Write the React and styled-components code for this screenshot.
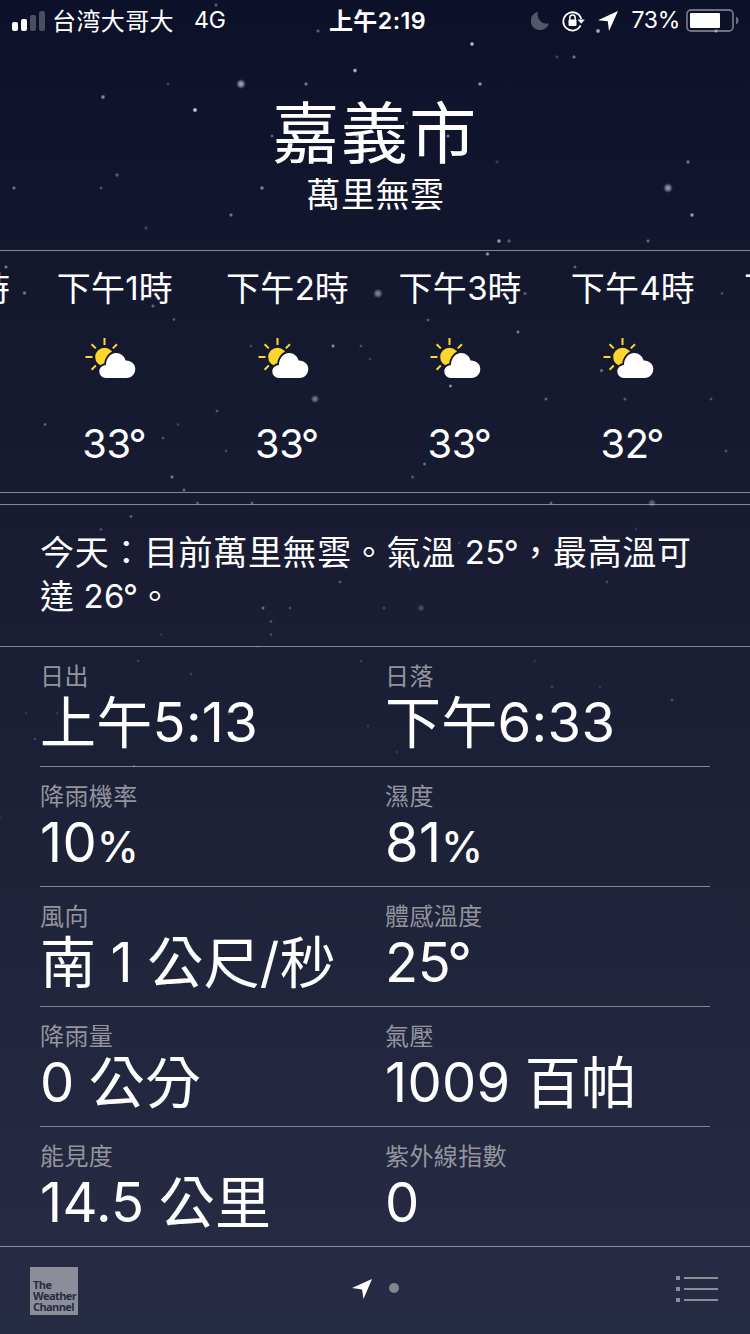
import React from "react";
import styled, { createGlobalStyle } from "styled-components";

const GlobalStyle = createGlobalStyle`
  html, body { margin: 0; padding: 0; }
  body { background: #0e122a; }
`;

const Screen = styled.main`
  position: relative;
  display: flex;
  flex-direction: column;
  width: 750px;
  height: 1334px;
  overflow: hidden;
  color: #fff;
  background: linear-gradient(180deg, #0c1028 0, #0f132b 100px, #141930 330px, #191c33 560px, #1c2037 740px, #262a42 1240px, #272c45 1334px);
  font-family: Inter, "Noto Sans CJK TC", sans-serif;

  & > * {
    flex: none;
  }
`;

const Sky = styled.svg`
  position: absolute;
  inset: 0;
  pointer-events: none;
`;

const Han = styled.span`
  font-family: "Noto Sans CJK TC", sans-serif;
  letter-spacing: ${(p) => p.$track || 0}px;
  line-height: 0;
  vertical-align: -0.025em;
`;

const Latin = styled.span`
  font-family: Inter, "Noto Sans CJK TC", sans-serif;
  font-size: 0.97em;
  letter-spacing: ${(p) => p.$track || 0}px;
  word-spacing: -0.025em;
  line-height: 0;
`;

const Degree = styled.span`
  margin: 0 -0.02em 0 -0.06em;
`;

function Mixed({ text, han = 0, latin = 0 }) {
  return text
    .split(/([ -~°]+)/)
    .filter(Boolean)
    .map((run, i) =>
      /^[ -~°]/.test(run) ? (
        <Latin key={i} $track={latin}>
          {run.replace("°", "")}
          {run.includes("°") && <Degree>°</Degree>}
        </Latin>
      ) : (
        <Han key={i} $track={han}>{run}</Han>
      )
    );
}

const StatusBar = styled.header`
  display: grid;
  grid-template-columns: 1fr auto 1fr;
  align-items: center;
  height: 40px;
  padding: 0 11px 0 12px;
  font-size: 24px;
  line-height: 41px;
  white-space: pre;
`;

const StatusSide = styled.div`
  display: flex;
  align-items: center;
  justify-content: ${(p) => (p.$end ? "flex-end" : "flex-start")};
  height: 40px;
`;

const Carrier = styled.span`
  margin-left: 6px;
  font-size: 24px;
`;

const Network = styled.span`
  margin-left: 20px;
  font-size: 23px;
`;

const Clock = styled.span`
  font-size: 24px;
  font-weight: 600;
  padding-left: 4px;
`;

const Percent = styled.span`
  margin: 0 6px 0 13px;
  font-size: 23px;
  letter-spacing: -0.3px;
`;

const StatusIcon = styled.svg`
  flex: none;
  margin-left: ${(p) => p.$gap || 0}px;
`;

const Heading = styled.section`
  display: flex;
  flex-direction: column;
  align-items: center;
  height: 210px;
`;

const City = styled.h1`
  margin: 54px 0 0;
  font-size: 67px;
  font-weight: 400;
  line-height: 76px;
`;

const Condition = styled.p`
  margin: 4px 0 0 1px;
  font-size: 34px;
  line-height: 40px;
`;

const Hours = styled.section`
  display: flex;
  box-sizing: border-box;
  height: 243px;
  padding-left: 28.5px;
  border-top: 1px solid #85868f;
  border-bottom: 1px solid #85868f;
`;

const HourStrip = styled.div`
  display: flex;
  margin-left: -172.7px;
`;

const Hour = styled.div`
  display: flex;
  flex: none;
  flex-direction: column;
  align-items: center;
  width: 172.7px;
  white-space: nowrap;
`;

const HourName = styled.span`
  margin-top: 17px;
  font-size: 34px;
  line-height: 40px;
`;

const HourIcon = styled.svg`
  margin: 29px 9px 0 0;
`;

const HourTemp = styled.span`
  margin: 39px 2px 0 0;
  font-size: 41px;
  line-height: 50px;
`;

const Summary = styled.section`
  box-sizing: border-box;
  height: 143px;
  margin-top: 11px;
  padding: 25px 40px 0;
  border-top: 1px solid #85868f;
  border-bottom: 1px solid #85868f;
  font-size: 34px;
  line-height: 44px;
  white-space: nowrap;
`;

const SummaryLine = styled.div`
  height: 44px;
`;

const Details = styled.section`
  display: flex;
  flex-direction: column;
  padding: 0 40px;
`;

const DetailRow = styled.div`
  display: grid;
  grid-template-columns: 345px 1fr;
  box-sizing: border-box;
  height: ${(p) => (p.$last ? 119 : 120)}px;
  border-bottom: ${(p) => (p.$last ? "0" : "1px solid #85868f")};
  white-space: nowrap;
`;

const Detail = styled.div`
  display: flex;
  flex-direction: column;
`;

const DetailLabel = styled.span`
  margin-top: 13px;
  font-size: 24px;
  line-height: 32px;
  color: #93949e;
`;

const DetailValue = styled.span`
  height: 60px;
  font-size: 56px;
  line-height: 60px;
`;

const Unit = styled.span`
  font-size: 42px;
  font-weight: 500;
  letter-spacing: -1px;
  line-height: 0;
`;

const TabBar = styled.footer`
  display: grid;
  grid-template-columns: 1fr auto 1fr;
  align-items: center;
  box-sizing: border-box;
  height: 88px;
  padding: 1px 32px 0 30px;
  border-top: 1px solid #8c8d98;
`;

const Provider = styled.div`
  display: flex;
  flex-direction: column;
  justify-content: flex-end;
  box-sizing: border-box;
  width: 48px;
  height: 48px;
  padding: 0 0 3px 3px;
  background: #8b8d99;
  color: #272b44;
  font: 700 11px/11px "Open Sans", sans-serif;
  letter-spacing: -0.6px;
`;

const Pages = styled.div`
  display: flex;
  align-items: center;
  gap: 17px;
  padding: 0 0 4px 2px;
`;

const PageDot = styled.span`
  width: 10px;
  height: 10px;
  margin-bottom: 2px;
  border-radius: 50%;
  background: #83858f;
`;

const ListButton = styled.svg`
  justify-self: end;
  margin-bottom: 3px;
`;

const stars = [
  [216, 5, 1.8, 0.4], [598, 31, 2.2, 0.8], [716, 31, 2, 0.5], [557, 57, 1.8, 0.25], [574, 57, 1.8, 0.5], [472, 44, 2, 0.9],
  [318, 31, 1.8, 0.4], [355, 70.5, 2, 0.85], [168, 84, 1.7, 0.25], [241, 84, 4, 0.65], [306, 84, 1.8, 0.55], [103, 97, 2.1, 0.6], [195, 110, 2.2, 0.95],
  [480, 84, 2, 0.65], [272, 136, 1.7, 0.4], [117, 175, 2, 0.35], [14, 188, 1.8, 0.5], [101, 188, 1.6, 0.35], [262, 188, 1.9, 0.6],
  [231, 215, 1.8, 0.5], [146, 228, 1.8, 0.25], [407, 123, 1.7, 0.2], [448, 136, 1.8, 0.5], [357, 136, 1.8, 0.4], [497, 162, 1.8, 0.2], [688, 162, 1.9, 0.5],
  [668, 188, 4, 0.6], [692, 215, 2, 0.7], [499, 241, 2, 0.7], [509, 241, 1.9, 0.35], [648, 241, 1.8, 0.4],
  [487.5, 254, 1.9, 0.65], [6, 267, 1.8, 0.5], [24.5, 293, 1.9, 0.5], [153, 306, 1.8, 0.4], [174, 319.5, 1.6, 0.35], [251, 346, 1.6, 0.25], [333, 346, 1.8, 0.6],
  [361, 346, 1.6, 0.3], [370, 359, 1.6, 0.2], [315, 399, 3.5, 0.45], [217, 411, 1.6, 0.35], [45, 424.5, 1.6, 0.4], [178, 424.5, 1.6, 0.2], [163, 438, 1.6, 0.3],
  [226, 451, 1.6, 0.25], [172, 477, 1.8, 0.5], [184, 490, 1.7, 0.4], [244, 280, 1.7, 0.35], [378, 293.5, 4, 0.5], [575, 267, 1.7, 0.4], [525, 293.5, 1.7, 0.4], [722, 293.5, 1.6, 0.3],
  [428, 320, 1.7, 0.35], [518, 332, 1.7, 0.55], [601.5, 370.5, 1.3, 0.65, "#69b586"], [450.5, 386, 1.7, 0.65], [546, 399, 1.7, 0.4], [625, 399, 1.7, 0.35],
  [711, 399, 1.6, 0.3], [424.5, 464, 1.6, 0.5], [412.5, 477, 1.7, 0.35], [726, 451, 1.7, 0.3], [197.5, 503, 1.6, 0.4], [252, 503, 1.6, 0.4], [551, 503, 1.6, 0.4], [652, 503, 3.3, 0.35],
  [131, 516.5, 1.6, 0.4], [101, 529.5, 1.6, 0.3], [340, 582, 1.6, 0.35], [263, 608, 1.7, 0.45], [290, 608, 1.6, 0.25], [271, 621.5, 1.6, 0.3], [271, 634.5, 1.6, 0.25], [161, 634.5, 1.5, 0.15],
  [258, 647, 1.5, 0.1], [636, 529, 1.5, 0.15], [459, 543, 1.6, 0.15], [410, 569, 1.6, 0.3], [607, 582, 1.6, 0.25], [384, 608, 1.6, 0.25], [421, 608, 3, 0.25],
  [138, 661, 1.5, 0.2], [191, 674, 1.5, 0.2], [361, 661, 1.5, 0.2], [26, 713, 1.5, 0.13], [57, 713, 1.5, 0.13], [35, 739, 1.5, 0.2], [229, 713, 2.4, 0.12], [368, 726, 1.5, 0.15],
  [552, 687, 1.6, 0.2], [600, 687, 1.5, 0.13], [672, 700, 1.5, 0.3], [397, 752, 1.5, 0.13], [134, 766, 1.5, 0.2], [535, 661, 1.5, 0.1], [0, 818, 1.5, 0.12],
];

const hours = [
  ["下午12時", "33°"], ["下午1時", "33°"], ["下午2時", "33°"], ["下午3時", "33°"], ["下午4時", "32°"], ["下午5時", "31°"],
];

const details = [
  [["日出", "上午5:13"], ["日落", "下午6:33"]],
  [["降雨機率", "10", "%"], ["濕度", "81", "%"]],
  [["風向", "南 1 公尺/秒"], ["體感溫度", "25°"]],
  [["降雨量", "0 公分"], ["氣壓", "1009 百帕"]],
  [["能見度", "14.5 公里"], ["紫外線指數", "0"]],
];

function Stars() {
  return (
    <Sky width="750" height="1334" viewBox="0 0 750 1334">
      <defs>
        <radialGradient id="glow">
          <stop offset="0" stopColor="#fff" />
          <stop offset="0.4" stopColor="#dfe6f2" stopOpacity="0.85" />
          <stop offset="1" stopColor="#bccbe0" stopOpacity="0" />
        </radialGradient>
      </defs>
      {stars.map(([x, y, r, opacity, fill], i) => (
        <circle key={i} cx={x} cy={y} r={r * 1.25} opacity={opacity} fill={fill || "url(#glow)"} />
      ))}
    </Sky>
  );
}

function PartlyCloudy() {
  return (
    <HourIcon width="51" height="42" viewBox="0 0 51 42">
      <g stroke="#ffd52e" strokeWidth="2">
        <path d="M19.5 1v7M0.5 20h7M6.6 7.2l4.2 4.2M32 7.2l-4.2 4.2M6.6 32.7l4.2-4.2" fill="none" />
      </g>
      <circle cx="19.5" cy="20" r="9.3" fill="#ffd52e" />
      <path
        d="M20.7 41a6.4 6.4 0 0 1-6.4-6.5c0-3.7 2.9-6.3 6.7-6.6 0-6.7 4.5-12 10-12 4.8 0 8.6 3.2 9.6 7.7 5.5-.2 9.7 3.5 9.7 8.5 0 5-3.7 8.9-8.7 8.9z"
        fill="#fff"
        stroke="#151930"
        strokeWidth="3.6"
        paintOrder="stroke"
      />
    </HourIcon>
  );
}

export default function App() {
  return (
    <Screen>
      <GlobalStyle />
      <Stars />
      <StatusBar>
        <StatusSide>
          <StatusIcon width="34" height="22" viewBox="0 0 34 22">
            <rect x="0" y="11" width="6" height="9" rx="2" fill="#fff" transform="translate(0 1)" />
            <rect x="9" y="9" width="6" height="12" rx="2" fill="#fff" />
            <rect x="18" y="5" width="6" height="16" rx="2" fill="#4c4e60" />
            <rect x="27" y="1" width="6" height="20" rx="2" fill="#4c4e60" />
          </StatusIcon>
          <Carrier><Mixed text="台湾大哥大" han={0.4} /></Carrier>
          <Network>4G</Network>
        </StatusSide>
        <Clock><Mixed text="上午2:19" han={0.4} latin={0.4} /></Clock>
        <StatusSide $end>
          <StatusIcon width="19" height="20" viewBox="0 0 19 20">
            <path d="M7.3 .7A9.3 9.3 0 1 0 18 12.3A8.8 8.8 0 0 1 7.3 .7Z" fill="#555769" />
          </StatusIcon>
          <StatusIcon $gap={12} width="24" height="22" viewBox="0 0 24 22">
            <path d="M18.6 15.4A9.1 9.1 0 1 1 19.2 9" fill="none" stroke="#fff" strokeWidth="1.8" />
            <path d="M15.5 9.5h7.3l-3.6 4.2z" fill="#fff" />
            <path d="M7.8 10V7.8a2.7 2.7 0 0 1 5.4 0V10" fill="none" stroke="#fff" strokeWidth="1.5" />
            <rect x="6.5" y="9.5" width="8" height="6.5" rx="1" fill="#fff" />
          </StatusIcon>
          <StatusIcon $gap={12} width="20" height="20" viewBox="0 0 20 20">
            <path d="M20 0L0 9.2l9.8 1L11 20z" fill="#fff" />
          </StatusIcon>
          <Percent>73%</Percent>
          <StatusIcon width="53" height="23" viewBox="0 0 53 23">
            <rect x="1" y="1" width="46" height="21" rx="4" fill="none" stroke="#70727f" strokeWidth="1.8" />
            <rect x="4" y="4" width="30" height="15" rx="1" fill="#fff" />
            <path d="M50 7.5a4.4 4.4 0 0 1 0 8z" fill="#70727f" />
          </StatusIcon>
        </StatusSide>
      </StatusBar>

      <Heading>
        <City><Mixed text="嘉義市" han={1.5} /></City>
        <Condition><Mixed text="萬里無雲" han={0.6} /></Condition>
      </Heading>

      <Hours>
        <HourStrip>
          {hours.map(([name, temp]) => (
            <Hour key={name}>
              <HourName><Mixed text={name} han={0.3} /></HourName>
              <PartlyCloudy />
              <HourTemp><Mixed text={temp} latin={-0.3} /></HourTemp>
            </Hour>
          ))}
        </HourStrip>
      </Hours>

      <Summary>
        <SummaryLine><Mixed text="今天：目前萬里無雲。氣溫 25°，最高溫可" han={0.65} latin={0.4} /></SummaryLine>
        <SummaryLine><Mixed text="達 26°。" han={0.65} latin={0.4} /></SummaryLine>
      </Summary>

      <Details>
        {details.map((row, i) => (
          <DetailRow key={i} $last={i === details.length - 1}>
            {row.map(([label, value, unit]) => (
              <Detail key={label}>
                <DetailLabel><Mixed text={label} han={0.4} /></DetailLabel>
                <DetailValue>
                  <Mixed text={value} han={0.3} latin={value.includes("°") ? -0.3 : 0.3} />
                  {unit && <Unit>{unit}</Unit>}
                </DetailValue>
              </Detail>
            ))}
          </DetailRow>
        ))}
      </Details>

      <TabBar>
        <Provider>
          <span>The</span>
          <span>Weather</span>
          <span>Channel</span>
        </Provider>
        <Pages>
          <svg width="20" height="20" viewBox="0 0 20 20">
            <path d="M20 0L0 9l10 1.6L11.5 20z" fill="#fff" />
          </svg>
          <PageDot />
        </Pages>
        <ListButton width="42" height="27" viewBox="0 0 42 27">
          <g fill="#8b8d99">
            <rect x="0" y="0" width="4" height="4" />
            <rect x="8" y="1" width="34" height="2" />
            <rect x="0" y="11" width="4" height="4" />
            <rect x="8" y="12" width="34" height="2" />
            <rect x="0" y="22" width="4" height="4" />
            <rect x="8" y="23" width="34" height="2" />
          </g>
        </ListButton>
      </TabBar>
    </Screen>
  );
}
